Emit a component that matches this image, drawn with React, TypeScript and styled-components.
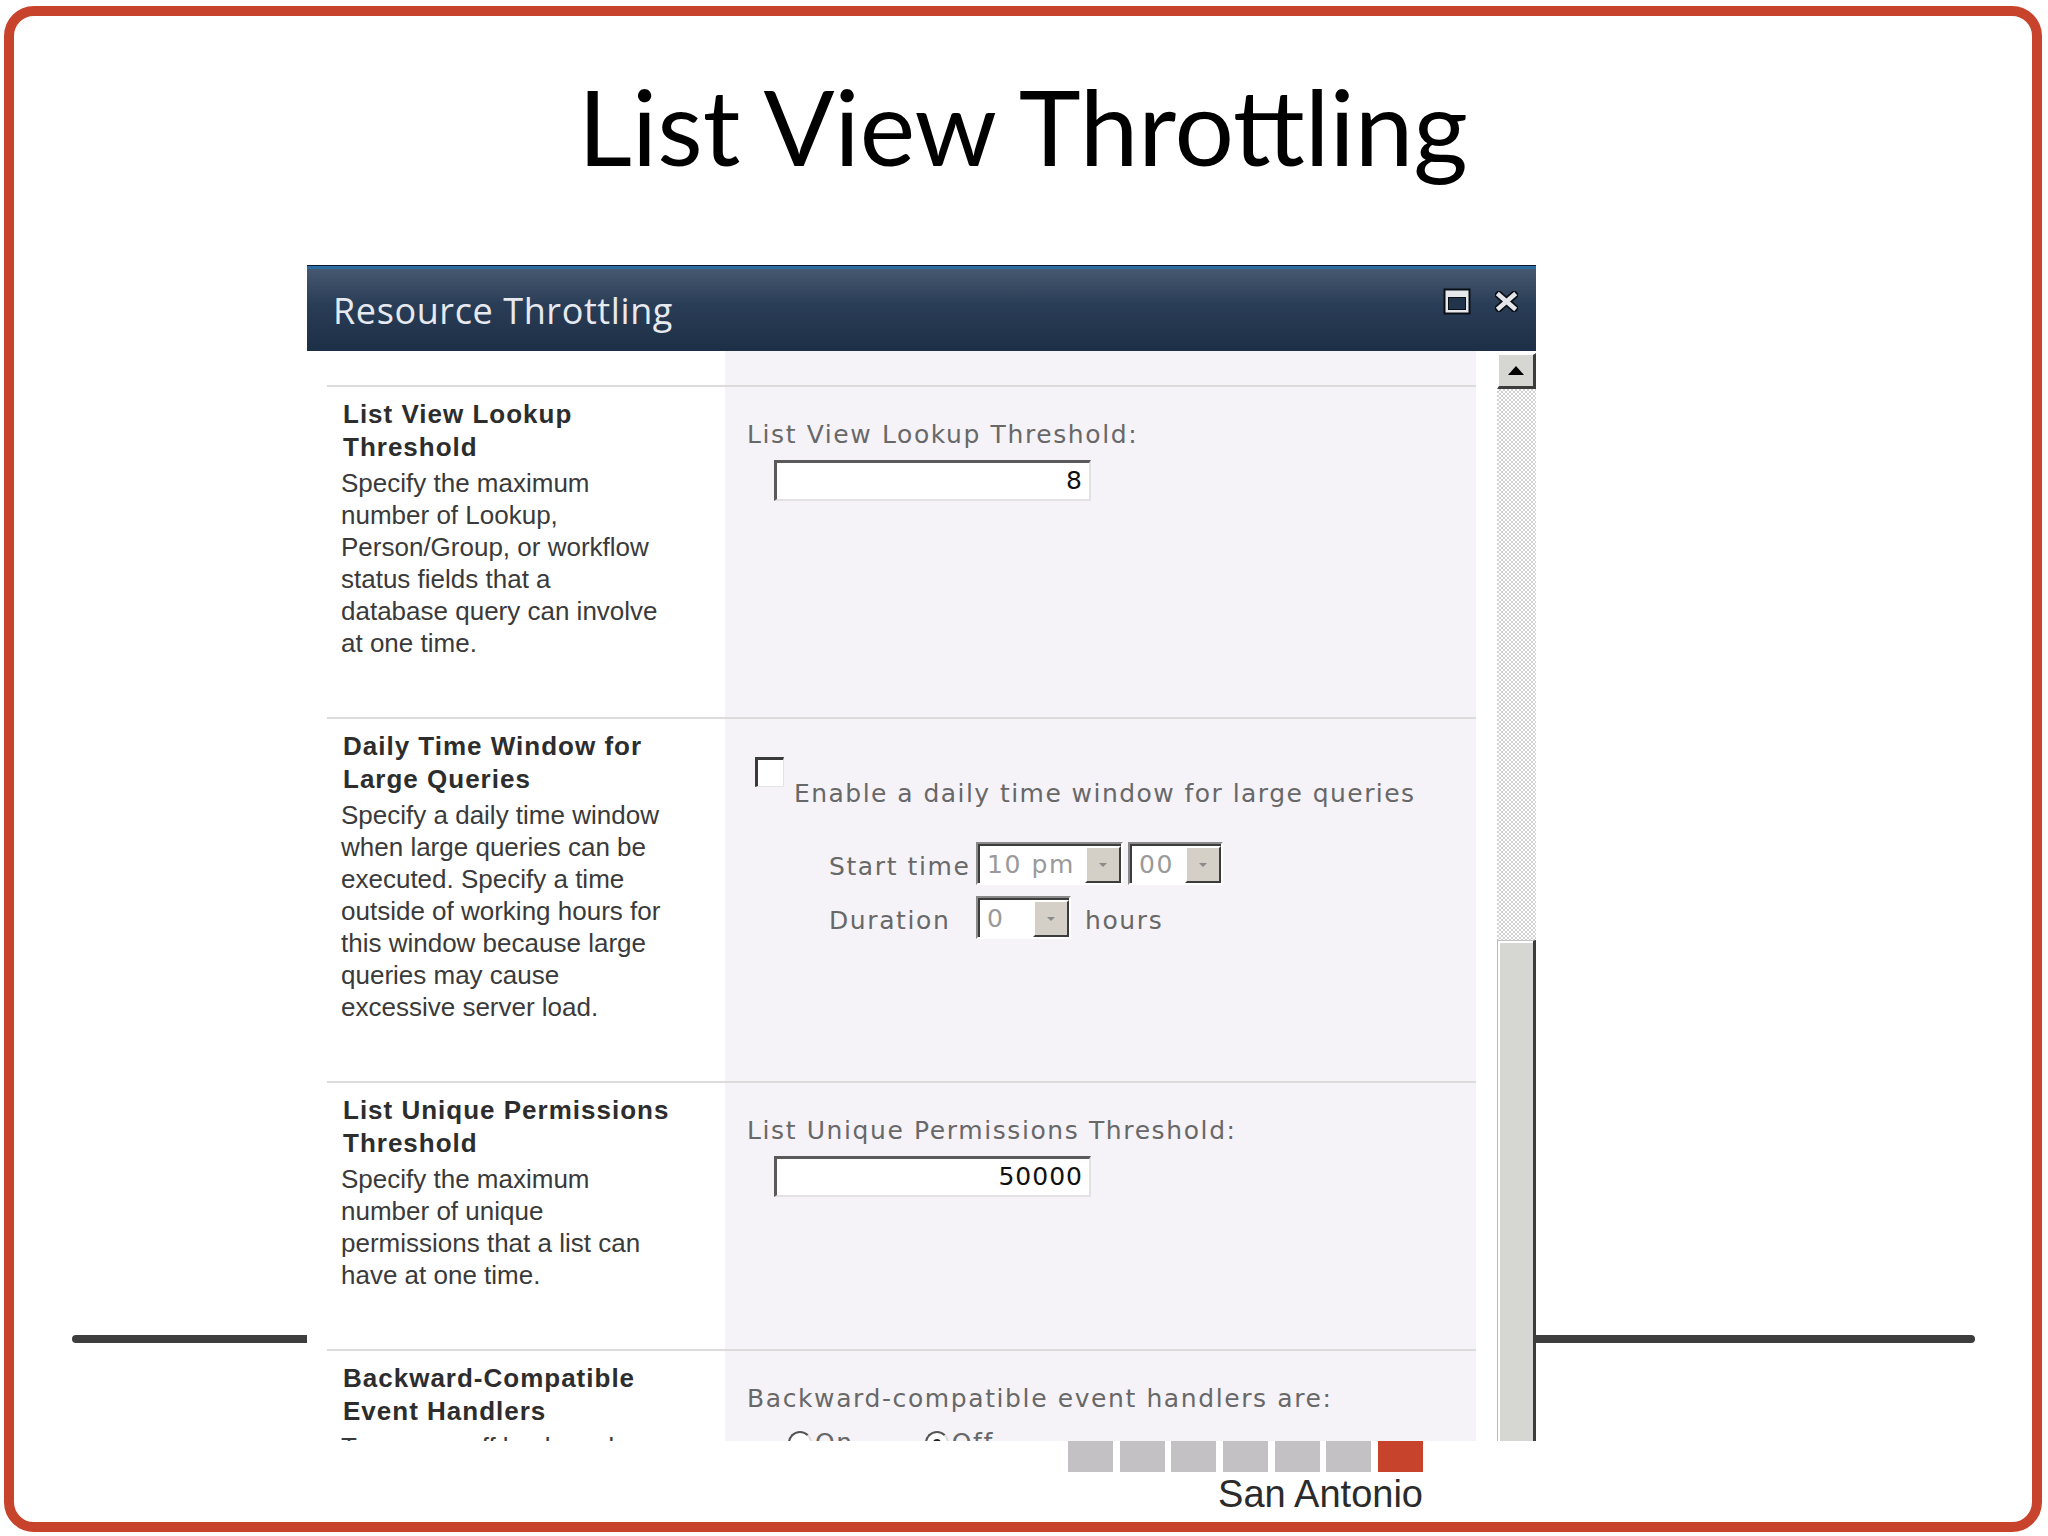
import React from 'react'
import styled, { createGlobalStyle } from 'styled-components'

const GlobalStyle = createGlobalStyle`
  html, body {
    margin: 0;
    padding: 0;
    background: #fff;
  }
  body {
    width: 2048px;
    height: 1536px;
    overflow: hidden;
  }
`

const SlideFrame = styled.div`
  position: relative;
  box-sizing: border-box;
  width: 2038px;
  height: 1526px;
  margin: 6px 0 0 4px;
  border: 10px solid #c7432c;
  border-radius: 30px;
  display: flex;
  flex-direction: column;
`

const RuleLine = styled.div`
  position: absolute;
  left: 58px;
  top: 1319px;
  width: 1903px;
  height: 8px;
  border-radius: 4px;
  background: #3d3d3d;
  z-index: 0;
`

const SlideTitle = styled.h1`
  margin: 57px 0 0;
  font-family: Lato, 'Open Sans', sans-serif;
  font-weight: 400;
  font-size: 105px;
  line-height: 1;
  text-align: center;
  color: #000;
`

const Window = styled.div`
  position: relative;
  z-index: 1;
  margin: 87px 0 0 293px;
  width: 1229px;
  height: 1176px;
  flex-shrink: 0;
  display: flex;
  flex-direction: column;
  background: #fff;
`

const TitleBar = styled.div`
  height: 86px;
  flex-shrink: 0;
  box-sizing: border-box;
  display: flex;
  justify-content: space-between;
  align-items: flex-start;
  padding: 0 18px 0 26px;
  background: linear-gradient(
    #0d1a2b 0,
    #0d1a2b 1px,
    #2b6ca3 1px,
    #2b6ca3 4px,
    #45586f 4px,
    #2a3d56 40px,
    #1d2f46 100%
  );
`

const TitleText = styled.div`
  padding-top: 28px;
  font-family: 'Open Sans', 'Liberation Sans', sans-serif;
  font-size: 36px;
  letter-spacing: 0.6px;
  line-height: 1;
  color: #e6eaf0;
`

const TitleIcons = styled.div`
  margin-top: 23px;
  display: flex;
  align-items: center;
  gap: 24px;
`

const Body = styled.div`
  flex: 1;
  display: flex;
  overflow: hidden;
`

const Content = styled.div`
  width: 1169px;
  display: flex;
  flex-direction: column;
`

const Section = styled.div<{ $height?: number; $ruled?: boolean }>`
  display: grid;
  grid-template-columns: 398px 1fr;
  margin-left: 20px;
  box-sizing: border-box;
  border-top: ${p => (p.$ruled ? '2px solid #dcdcdc' : 'none')};
  ${p => (p.$height ? `height: ${p.$height}px; flex-shrink: 0;` : 'flex: 1; min-height: 0;')}
`

const InfoCell = styled.div`
  padding: 10.5px 10px 0 14px;
  background: #fff;
  font-family: 'Liberation Sans', Arial, sans-serif;
  overflow: hidden;
`

const InfoTitle = styled.div`
  margin-left: 2px;
  font-weight: 700;
  font-size: 26px;
  letter-spacing: 1px;
  line-height: 33px;
  color: #2d2d2d;
`

const InfoText = styled.div`
  margin-top: 3.5px;
  font-size: 26px;
  line-height: 32px;
  color: #3a3a3a;
`

const FieldCell = styled.div`
  padding: 33px 0 0 22px;
  background: #f5f3f8;
  font-family: 'DejaVu Sans', Verdana, sans-serif;
  font-size: 25px;
  letter-spacing: 1.6px;
  color: #686868;
  overflow: hidden;
`

const FieldLabel = styled.div`
  line-height: 30px;
`

const NumberInput = styled.div`
  margin: 10px 0 0 27px;
  width: 317px;
  height: 41px;
  box-sizing: border-box;
  border-style: solid;
  border-width: 3px 2px 2px 3px;
  border-color: #5a5a5a #e2e2e2 #e2e2e2 #5a5a5a;
  background: #fff;
  padding-right: 6px;
  text-align: right;
  line-height: 36px;
  color: #111;
  letter-spacing: 1px;
`

const CheckRow = styled.div`
  display: flex;
  align-items: flex-start;
  margin-top: -33px;
`

const CheckBox = styled.div`
  margin: 38px 0 0 8px;
  width: 29px;
  height: 30px;
  box-sizing: border-box;
  border-style: solid;
  border-width: 3px 1px 1px 3px;
  border-color: #3a3a3a #e4e4e4 #e4e4e4 #3a3a3a;
  background: #fff;
`

const CheckText = styled.div`
  margin: 60px 0 0 10px;
  line-height: 30px;
  letter-spacing: 1.45px;
`

const TimeGrid = styled.div`
  margin: 33px 0 0 82px;
  display: grid;
  grid-template-columns: 147px auto;
  row-gap: 11px;
  align-items: center;
`

const TimeLabel = styled.div`
  padding-top: 6px;
  line-height: 30px;
`

const ControlRow = styled.div`
  display: flex;
  align-items: center;
  gap: 5px;
`

const Select = styled.div<{ $width: number }>`
  width: ${p => p.$width}px;
  height: 43px;
  box-sizing: border-box;
  display: flex;
  border-style: solid;
  border-width: 2px;
  border-color: #8a8a8a #fff #fff #8a8a8a;
  box-shadow: inset 2px 2px 0 #3c3c3c;
  background: #fff;
`

const SelectValue = styled.div`
  flex: 1;
  padding: 2px 0 0 9px;
  line-height: 37px;
  color: #9a9a9a;
`

const SelectButton = styled.div`
  width: 36px;
  box-sizing: border-box;
  border-style: solid;
  border-width: 2px;
  border-color: #fff #3c3c3c #3c3c3c #fff;
  background: #d4d0c8;
  display: flex;
  align-items: center;
  justify-content: center;
  margin: 2px 0 0 0;
`

const Unit = styled.span`
  margin-left: 9px;
  padding-top: 6px;
  line-height: 30px;
`

const RadioRow = styled.div`
  margin: 14px 0 0 41px;
  display: flex;
  align-items: center;
  line-height: 30px;
`

const Radio = styled.div<{ $checked?: boolean }>`
  position: relative;
  width: 24px;
  height: 24px;
  box-sizing: border-box;
  border-radius: 50%;
  border: 2px solid;
  border-color: #555 #ddd #ddd #555;
  background: #fff;
  margin-right: 3px;
  &::after {
    content: '';
    display: ${p => (p.$checked ? 'block' : 'none')};
    position: absolute;
    left: 6px;
    top: 6px;
    width: 8px;
    height: 8px;
    border-radius: 50%;
    background: #222;
  }
`

const RadioLabel = styled.span<{ $gap: number }>`
  margin-right: ${p => p.$gap}px;
`

const ScrollBar = styled.div`
  width: 39px;
  margin-left: 21px;
  display: flex;
  flex-direction: column;
`

const ScrollButton = styled.div`
  margin-top: 2px;
  height: 36px;
  box-sizing: border-box;
  background: #d6d6d3;
  border-style: solid;
  border-width: 2px 3px 3px 2px;
  border-color: #fff #3c3c3c #3c3c3c #fff;
  display: flex;
  align-items: center;
  justify-content: center;
`

const ScrollTrack = styled.div`
  height: 551px;
  background: repeating-conic-gradient(#d2d2d2 0 25%, #fff 0 50%) 0 0 / 4px 4px;
`

const ScrollThumb = styled.div`
  flex: 1;
  box-sizing: border-box;
  background: #d6d6d3;
  border-style: solid;
  border-width: 1px 3px 0 1px;
  border-color: #c4c4c4 #3c3c3c #c4c4c4 #b8b8b8;
  box-shadow: inset 2px 2px 0 #fff;
`

const Footer = styled.div`
  margin-left: 1054px;
  width: 355px;
  display: flex;
  flex-direction: column;
  align-items: flex-end;
`

const StepRow = styled.div`
  display: flex;
  gap: 6.66px;
`

const Step = styled.div<{ $active?: boolean }>`
  width: 45px;
  height: 31px;
  background: ${p => (p.$active ? '#c7432c' : '#c3c1c3')};
`

const Place = styled.div`
  margin-top: 3px;
  font-family: 'Liberation Sans', Arial, sans-serif;
  font-size: 38px;
  line-height: 1;
  color: #2b2b2b;
`

function MaximizeIcon() {
  return (
    <svg width="28" height="27" viewBox="0 0 28 27">
      <rect x="0.5" y="0.5" width="27" height="26" fill="#0b0f16" />
      <rect x="2.5" y="2.5" width="23" height="22" fill="#e6e8ec" />
      <rect x="5" y="9" width="18" height="13" fill="#0b0f16" />
      <rect x="6" y="10" width="16" height="11" fill="#22344c" />
    </svg>
  )
}

function CloseIcon() {
  return (
    <svg width="23" height="21" viewBox="0 0 23 21">
      <path d="M4 4 L19 17 M19 4 L4 17" stroke="#0b0f16" strokeWidth="8" strokeLinecap="square" />
      <path d="M4 4 L19 17 M19 4 L4 17" stroke="#e3e5e8" strokeWidth="4.5" strokeLinecap="square" />
    </svg>
  )
}

function DownArrow() {
  return (
    <svg width="10" height="6" viewBox="0 0 10 6">
      <path d="M1 1 L9 1 L5 5 Z" fill="#8a8a8a" />
    </svg>
  )
}

function UpArrow() {
  return (
    <svg width="16" height="9" viewBox="0 0 16 9">
      <path d="M0 9 L16 9 L8 0 Z" fill="#000" />
    </svg>
  )
}

function Lines({ lines }: { lines: string[] }) {
  return (
    <>
      {lines.map((line, i) => (
        <React.Fragment key={i}>
          {i > 0 && <br />}
          {line}
        </React.Fragment>
      ))}
    </>
  )
}

function TimeSelect({ width, value }: { width: number; value: string }) {
  return (
    <Select $width={width}>
      <SelectValue>{value}</SelectValue>
      <SelectButton>
        <DownArrow />
      </SelectButton>
    </Select>
  )
}

function ResourceThrottling() {
  return (
    <Window>
      <TitleBar>
        <TitleText>Resource Throttling</TitleText>
        <TitleIcons>
          <MaximizeIcon />
          <CloseIcon />
        </TitleIcons>
      </TitleBar>
      <Body>
        <Content>
          <Section $height={34}>
            <InfoCell />
            <FieldCell />
          </Section>

          <Section $height={332} $ruled>
            <InfoCell>
              <InfoTitle>
                <Lines lines={['List View Lookup', 'Threshold']} />
              </InfoTitle>
              <InfoText>
                <Lines
                  lines={[
                    'Specify the maximum',
                    'number of Lookup,',
                    'Person/Group, or workflow',
                    'status fields that a',
                    'database query can involve',
                    'at one time.',
                  ]}
                />
              </InfoText>
            </InfoCell>
            <FieldCell>
              <FieldLabel>List View Lookup Threshold:</FieldLabel>
              <NumberInput>8</NumberInput>
            </FieldCell>
          </Section>

          <Section $height={364} $ruled>
            <InfoCell>
              <InfoTitle>
                <Lines lines={['Daily Time Window for', 'Large Queries']} />
              </InfoTitle>
              <InfoText>
                <Lines
                  lines={[
                    'Specify a daily time window',
                    'when large queries can be',
                    'executed. Specify a time',
                    'outside of working hours for',
                    'this window because large',
                    'queries may cause',
                    'excessive server load.',
                  ]}
                />
              </InfoText>
            </InfoCell>
            <FieldCell>
              <CheckRow>
                <CheckBox />
                <CheckText>Enable a daily time window for large queries</CheckText>
              </CheckRow>
              <TimeGrid>
                <TimeLabel>Start time</TimeLabel>
                <ControlRow>
                  <TimeSelect width={147} value="10 pm" />
                  <TimeSelect width={95} value="00" />
                </ControlRow>
                <TimeLabel>Duration</TimeLabel>
                <ControlRow>
                  <TimeSelect width={95} value="0" />
                  <Unit>hours</Unit>
                </ControlRow>
              </TimeGrid>
            </FieldCell>
          </Section>

          <Section $height={268} $ruled>
            <InfoCell>
              <InfoTitle>
                <Lines lines={['List Unique Permissions', 'Threshold']} />
              </InfoTitle>
              <InfoText>
                <Lines
                  lines={[
                    'Specify the maximum',
                    'number of unique',
                    'permissions that a list can',
                    'have at one time.',
                  ]}
                />
              </InfoText>
            </InfoCell>
            <FieldCell>
              <FieldLabel>List Unique Permissions Threshold:</FieldLabel>
              <NumberInput>50000</NumberInput>
            </FieldCell>
          </Section>

          <Section $ruled>
            <InfoCell>
              <InfoTitle>
                <Lines lines={['Backward-Compatible', 'Event Handlers']} />
              </InfoTitle>
              <InfoText>
                <Lines
                  lines={[
                    'Turn on or off backward-',
                    'compatible event handlers',
                    'for this Web application.',
                  ]}
                />
              </InfoText>
            </InfoCell>
            <FieldCell>
              <FieldLabel>Backward-compatible event handlers are:</FieldLabel>
              <RadioRow>
                <Radio />
                <RadioLabel $gap={71}>On</RadioLabel>
                <Radio $checked />
                <RadioLabel $gap={0}>Off</RadioLabel>
              </RadioRow>
            </FieldCell>
          </Section>
        </Content>

        <ScrollBar>
          <ScrollButton>
            <UpArrow />
          </ScrollButton>
          <ScrollTrack />
          <ScrollThumb />
        </ScrollBar>
      </Body>
    </Window>
  )
}

function App() {
  return (
    <>
      <GlobalStyle />
      <SlideFrame>
        <RuleLine />
        <SlideTitle>List View Throttling</SlideTitle>
        <ResourceThrottling />
        <Footer>
          <StepRow>
            <Step />
            <Step />
            <Step />
            <Step />
            <Step />
            <Step />
            <Step $active />
          </StepRow>
          <Place>San Antonio</Place>
        </Footer>
      </SlideFrame>
    </>
  )
}

export default App
